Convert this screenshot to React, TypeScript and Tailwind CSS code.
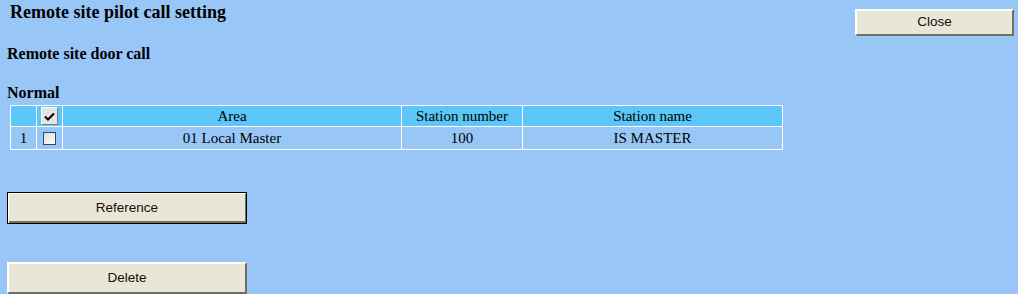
import React from "react";

const rows = [{ no: 1, area: "01 Local Master", station: "100", name: "IS MASTER" }];

export default function App() {
  return (
    <div className="min-h-[294px] w-[1018px] bg-[#98c7f7] relative overflow-hidden font-['Liberation_Serif',serif] text-black">
      <div className="flex items-start justify-between">
        <h1 className="ml-[10px] mt-[2px] text-[18px] font-bold leading-[20px]">
          Remote site pilot call setting
        </h1>
        <FormButton label="Close" className="mt-[9px] mr-[4px] w-[159px] h-[27px]" />
      </div>

      <h2 className="ml-[7px] mt-[9px] text-[16px] font-bold leading-[18px]">Remote site door call</h2>
      <h3 className="ml-[7px] mt-[21px] text-[16px] font-bold leading-[18px]">Normal</h3>

      {/* Table */}
      <table className="ml-[10px] mt-[3px] border-collapse border-r border-b border-r-[#a0a0a0] border-b-[#a0a0a0] text-[15px] leading-[18px]">
        <thead>
          <tr className="bg-[#5bc6f7] h-[21px]">
            <th className="w-[26px] border border-white font-normal"></th>
            <th className="w-[26px] border border-white font-normal p-0">
              <div className="mx-auto flex h-[18px] w-[17px] items-center justify-center border border-t-white border-l-white border-r-[#808080] border-b-[#808080] bg-[#e4e4e4]">
                <svg width="11" height="9" viewBox="0 0 11 9">
                  <path d="M1 4.5 L4 7.5 L10 1.5" fill="none" stroke="black" strokeWidth="2" />
                </svg>
              </div>
            </th>
            <th className="w-[339px] border border-white font-normal">Area</th>
            <th className="w-[121px] border border-white font-normal">Station number</th>
            <th className="w-[260px] border border-white font-normal">Station name</th>
          </tr>
        </thead>
        <tbody>
          {rows.map((r) => (
            <tr key={r.no} className="h-[23px]">
              <td className="border border-white text-center">{r.no}</td>
              <td className="border border-white p-0">
                <div className="mx-auto h-[13px] w-[13px] border border-[#1c5180] bg-gradient-to-br from-[#dcdcd6] to-white" />
              </td>
              <td className="border border-white text-center">{r.area}</td>
              <td className="border border-white text-center">{r.station}</td>
              <td className="border border-white text-center">{r.name}</td>
            </tr>
          ))}
        </tbody>
      </table>

      <div className="ml-[7px] mt-[42px] flex flex-col gap-[38px]">
        <FormButton label="Reference" focused className="w-[240px] h-[32px]" />
        <FormButton label="Delete" className="w-[240px] h-[32px]" />
      </div>
    </div>
  );
}

/* ------------------------- Helper Components ------------------------- */

function FormButton({
  label,
  className = "",
  focused = false,
}: {
  label: string;
  className?: string;
  focused?: boolean;
}) {
  return (
    <button
      className={
        "flex items-center justify-center bg-[#e8e7d7] font-['Liberation_Sans',Arial,sans-serif] text-[13.5px] text-[#1a0a0a] " +
        (focused
          ? "border border-black shadow-[inset_1px_1px_0_#ffffff,inset_-1px_-2px_0_#716f64] "
          : "border-t-2 border-l-2 border-t-white border-l-white border-b-2 border-r-2 border-b-[#716f64] border-r-[#716f64] ") +
        className
      }
    >
      {label}
    </button>
  );
}
